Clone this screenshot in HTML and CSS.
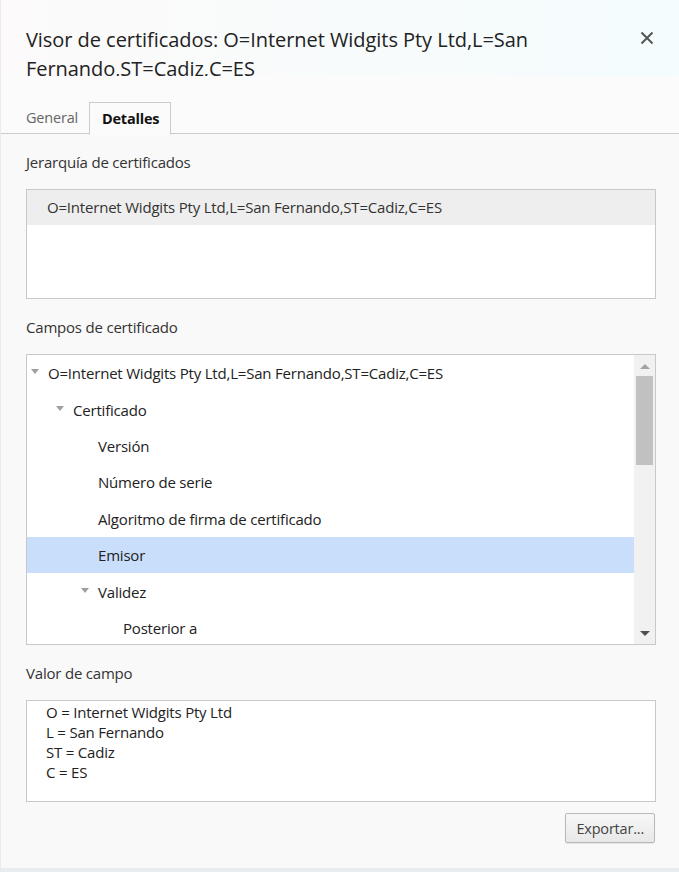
FILE: index.html
```html
<!DOCTYPE html>
<html lang="es">
<head>
<meta charset="utf-8">
<title>Visor de certificados</title>
<link rel="stylesheet" href="styles.css">
</head>
<body>
<div class="dialog">
  <div class="header">
    <h1 class="title">Visor de certificados: O=Internet Widgits Pty Ltd,L=San Fernando,ST=Cadiz,C=ES</h1>
    <button class="close" aria-label="Cerrar">
      <svg width="14" height="14" viewBox="0 0 14 14"><path d="M1.5 1.5L12.5 12.5M12.5 1.5L1.5 12.5" stroke="#555" stroke-width="2" fill="none"/></svg>
    </button>
  </div>
  <div class="tabs">
    <div class="tab">General</div>
    <div class="tab active">Detalles</div>
  </div>
  <div class="content">
    <div class="label">Jerarquía de certificados</div>
    <div class="box hierarchy">
      <div class="hrow selected-gray">O=Internet Widgits Pty Ltd,L=San Fernando,ST=Cadiz,C=ES</div>
    </div>
    <div class="label">Campos de certificado</div>
    <div class="box fields">
      <div class="tree">
        <div class="trow l0"><span class="tri"></span>O=Internet Widgits Pty Ltd,L=San Fernando,ST=Cadiz,C=ES</div>
        <div class="trow l1"><span class="tri"></span>Certificado</div>
        <div class="trow l2"><span class="tri none"></span>Versión</div>
        <div class="trow l2"><span class="tri none"></span>Número de serie</div>
        <div class="trow l2"><span class="tri none"></span>Algoritmo de firma de certificado</div>
        <div class="trow l2 sel"><span class="tri none"></span>Emisor</div>
        <div class="trow l2"><span class="tri"></span>Validez</div>
        <div class="trow l3"><span class="tri none"></span>Posterior a</div>
      </div>
      <div class="scrollbar">
        <div class="arrow up"></div>
        <div class="track"><div class="thumb"></div></div>
        <div class="arrow down"></div>
      </div>
    </div>
    <div class="label">Valor de campo</div>
    <div class="box value">
      <div>O = Internet Widgits Pty Ltd</div>
      <div>L = San Fernando</div>
      <div>ST = Cadiz</div>
      <div>C = ES</div>
    </div>
    <div class="actions">
      <button class="btn">Exportar...</button>
    </div>
  </div>
</div>
</body>
</html>
```
FILE: styles.css
```css
html, body {
  margin: 0;
  padding: 0;
  background: #e8ecee;
}
body {
  font-family: "Open Sans", "Noto Sans", sans-serif;
  color: #333;
  width: 679px;
  height: 872px;
  overflow: hidden;
}
.dialog {
  margin-left: 1px;
  width: 678px;
  height: 868px;
  background: #f9f9f9;
  display: flex;
  flex-direction: column;
}
.header {
  background: linear-gradient(to right, #fcfafa, #f4fcfd);
  display: flex;
  align-items: flex-start;
  padding: 25px 25px 0 25px;
  height: 76px;
  box-sizing: border-box;
}
.title {
  margin: 0;
  flex: 1;
  font-weight: 400;
  font-size: 20px;
  line-height: 29px;
  color: #222;
  letter-spacing: -0.05px;
  padding-right: 60px;
}
.close {
  border: 0;
  background: transparent;
  padding: 0;
  margin-top: 6px;
  width: 14px;
  height: 14px;
  display: flex;
}
.tabs {
  display: flex;
  padding: 26px 0 0 25px;
  height: 58px;
  box-sizing: border-box;
  border-bottom: 1px solid #cbcbcb;
  background: #fbfbfb;
  gap: 11px;
}
.tab {
  font-size: 14.5px;
  color: #666;
  height: 31px;
  line-height: 31px;
  margin-bottom: -1px;
  letter-spacing: -0.2px;
}
.tab.active {
  color: #111;
  font-weight: 700;
  border: 1px solid #cbcbcb;
  border-bottom: 1px solid #fbfbfb;
  background: #fbfbfb;
  padding: 0 11px 0 12px;
}
.content {
  padding: 0 23px 0 25px;
  display: flex;
  flex-direction: column;
}
.label {
  font-size: 15px;
  line-height: 20px;
  margin: 18px 0 17px 0;
  color: #333;
  letter-spacing: -0.2px;
}
.box {
  background: #fff;
  border: 1px solid #c8c8c8;
  font-size: 15px;
  letter-spacing: -0.2px;
}
.hierarchy {
  height: 108px;
}
.hrow {
  height: 35px;
  line-height: 35px;
  padding-left: 20px;
  color: #333;
}
.selected-gray { background: #eeeeee; }
.fields {
  height: 289px;
  display: flex;
}
.tree {
  flex: 1;
  overflow: hidden;
}
.trow {
  height: 36.4px;
  line-height: 36px;
  display: flex;
  align-items: center;
  white-space: nowrap;
  color: #222;
}
.trow.sel { background: #c9defa; }
.tri {
  display: inline-block;
  width: 0;
  height: 0;
  border-left: 4px solid transparent;
  border-right: 4px solid transparent;
  border-top: 5px solid #a0a0a0;
  margin-right: 9px;
  margin-top: -3px;
}
.tri.none { border-top-color: transparent; }
.l0 { padding-left: 4px; }
.l1 { padding-left: 29px; }
.l2 { padding-left: 54px; }
.l3 { padding-left: 79px; }
.scrollbar {
  width: 21px;
  background: #f1f1f1;
  display: flex;
  flex-direction: column;
  align-items: center;
}
.arrow {
  width: 0;
  height: 0;
  border-left: 5px solid transparent;
  border-right: 5px solid transparent;
}
.arrow.up {
  border-bottom: 5px solid #a3a3a3;
  margin-top: 9px;
  margin-bottom: 7px;
}
.arrow.down {
  border-top: 5px solid #505050;
  margin-top: 7px;
  margin-bottom: 8px;
}
.track {
  flex: 1;
  width: 100%;
  display: flex;
  justify-content: center;
}
.thumb {
  width: 17px;
  height: 89px;
  background: #c1c1c1;
}
.value {
  padding: 1px 19px;
  line-height: 20px;
  color: #222;
  box-sizing: border-box;
  height: 102px;
}
.actions {
  display: flex;
  justify-content: flex-end;
  margin-top: 11px;
}
.btn {
  font-family: "Open Sans", "Noto Sans", sans-serif;
  font-size: 14.5px;
  color: #444;
  letter-spacing: -0.2px;
  height: 30px;
  padding: 0 10px;
  border: 1px solid #b8b8b8;
  border-radius: 2px;
  background: linear-gradient(#f7f7f7, #e8e8e8);
  box-shadow: 0 1px 1px rgba(0,0,0,0.08);
  margin-right: 1px;
}
```
